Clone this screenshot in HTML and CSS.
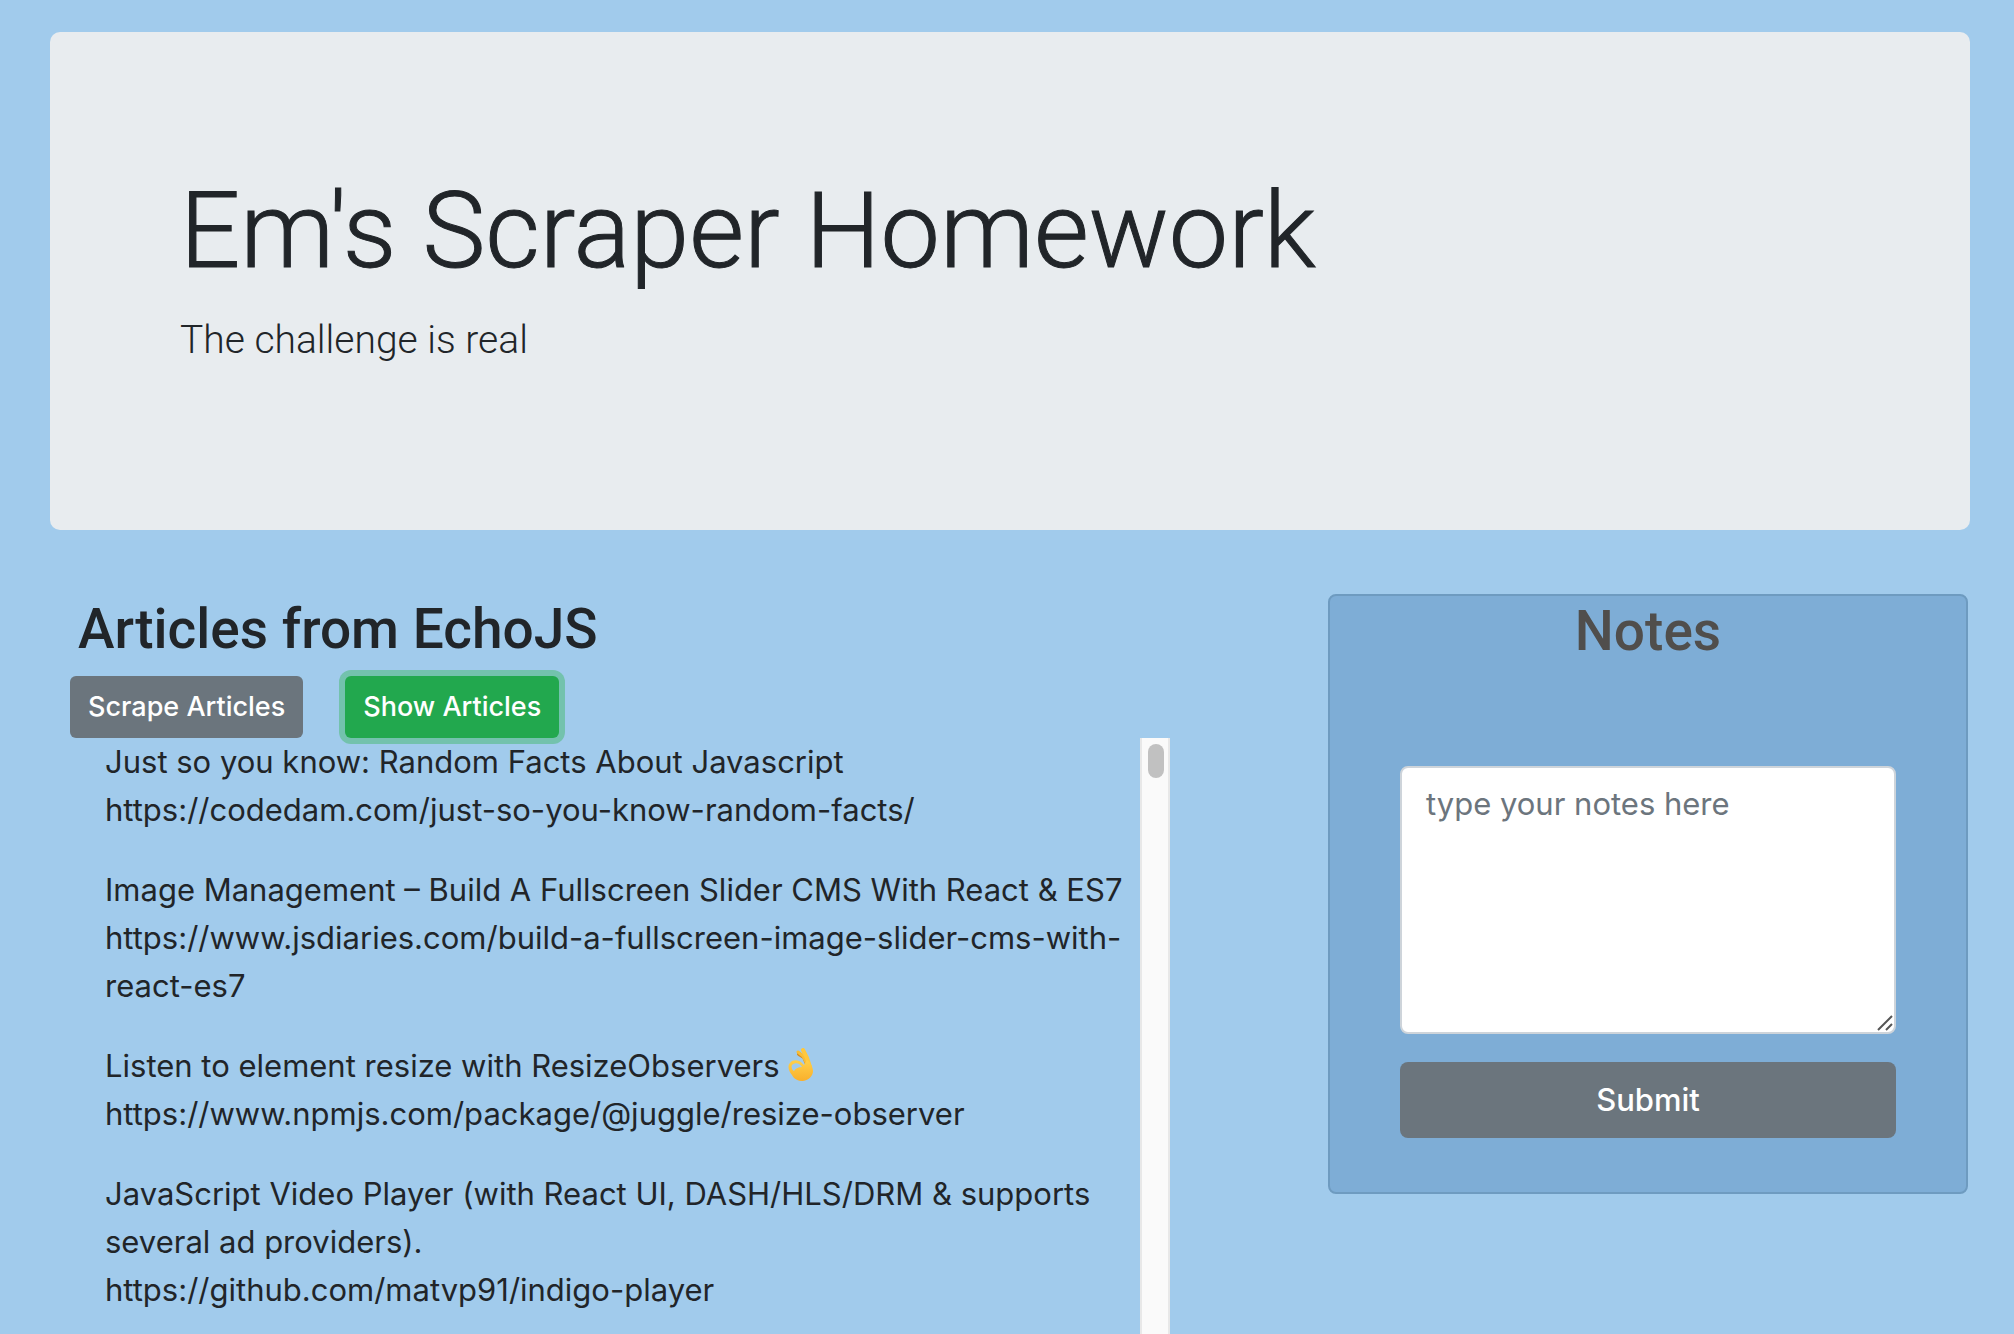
FILE: index.html
```html
<!DOCTYPE html>
<html lang="en">
<head>
<meta charset="utf-8">
<meta name="viewport" content="width=device-width, initial-scale=1">
<title>Em's Scraper Homework</title>
<link rel="stylesheet" href="styles.css">
</head>
<body>
<header class="jumbotron">
  <h1 class="display">Em's Scraper Homework</h1>
  <p class="lead">The challenge is real</p>
</header>
<main class="content">
  <section class="articles">
    <h2 class="heading articles-heading">Articles from EchoJS</h2>
    <div class="actions">
      <button type="button" class="btn">Scrape Articles</button>
      <button type="button" class="btn btn-success">Show Articles</button>
    </div>
    <div class="scroll-area">
      <div class="article-list">
        <p class="article">Just so you know: Random Facts About Javascript<br>https://codedam.com/just-so-you-know-random-facts/</p>
        <p class="article">Image Management – Build A Fullscreen Slider CMS With React &amp; ES7<br>https://www.jsdiaries.com/build-a-fullscreen-image-slider-cms-with-react-es7</p>
        <p class="article">Listen to element resize with ResizeObservers
          <svg class="emoji" viewBox="0 0 26 34" role="img" aria-label="OK hand">
            <defs><linearGradient id="skin" x1="0" y1="0" x2="0" y2="1"><stop offset="0" stop-color="#ffd04a"/><stop offset="1" stop-color="#f9b02c"/></linearGradient></defs>
            <g fill="none" stroke-linecap="round" stroke-linejoin="round">
              <path d="m11 6 5 3 3 7" stroke="#d08a22" stroke-width="4"/>
              <path d="m10 4 5 4 4 8" stroke="#f9bd35" stroke-width="3"/>
              <path d="m15 2 4 8 3 9" stroke="#ffc83d" stroke-width="4"/>
            </g>
            <path fill="url(#skin)" fill-rule="evenodd" d="M2 15c3-4 9-3 12 0l2 2 3-5c3 2 6 7 6 11 0 5-4 9-10 10-5 0-9-2-11-6-3-3-5-9-2-12Zm2 2c-1 2 0 5 2 6 1-2 4-4 8-4-2-4-7-5-10-2Z"/>
          </svg><br>https://www.npmjs.com/package/@juggle/resize-observer</p>
        <p class="article">JavaScript Video Player (with React UI, DASH/HLS/DRM &amp; supports several ad providers).<br>https://github.com/matvp91/indigo-player</p>
      </div>
      <div class="track" aria-hidden="true"><div class="thumb"></div></div>
    </div>
  </section>
  <form class="notes">
    <h2 class="heading notes-heading"><label for="note">Notes</label></h2>
    <div class="note-field">
      <textarea id="note" class="note-input" placeholder="type your notes here"></textarea>
      <svg class="grip" viewBox="0 0 16 16" aria-hidden="true"><path d="M1 15 15 1M9 15l6-6" stroke="#555" stroke-width="2"/></svg>
    </div>
    <button type="button" class="btn btn-block">Submit</button>
  </form>
</main>
</body>
</html>
```

FILE: styles.css
```css
* {
  box-sizing: border-box;
}

body {
  margin: 0;
  min-height: 100vh;
  display: flex;
  flex-direction: column;
  padding: 32px 44px 0 50px;
  background: #a1cbec;
  color: #212529;
  font-family: Inter, "Liberation Sans", sans-serif;
  font-size: 31px;
  line-height: 48px;
}

h1,
h2,
p {
  margin: 0;
}

.jumbotron {
  padding: 132px 130px 160px;
  border-radius: 10px;
  background: #e8ecef;
}

.display {
  margin-bottom: 12px;
  font-family: Roboto, Inter, sans-serif;
  font-size: 106px;
  font-weight: 300;
  line-height: 134px;
  -webkit-text-stroke: 1px currentColor;
}

.lead {
  font-family: Roboto, Inter, sans-serif;
  font-size: 39px;
  font-weight: 300;
  line-height: 60px;
}

.content {
  flex: 1;
  display: flex;
  justify-content: space-between;
  align-items: flex-start;
  gap: 40px;
  padding: 64px 2px 0 20px;
}

.articles {
  align-self: stretch;
  display: flex;
  flex-direction: column;
  width: 1100px;
}

.heading {
  font-family: Roboto, Inter, sans-serif;
  font-size: 55px;
  font-weight: 500;
  line-height: 70px;
}

.articles-heading {
  padding: 0 8px;
  margin-bottom: 12px;
}

.actions {
  display: flex;
  gap: 42px;
}

.btn {
  height: 62px;
  padding: 0 18px;
  border: 0;
  border-radius: 6px;
  background: #6b757d;
  color: #fff;
  font: 500 27px/42px Inter, "Liberation Sans", sans-serif;
}

.btn-success {
  background: #22a84e;
  box-shadow: 0 0 0 6px #73c2ad;
}

.scroll-area {
  flex: 1;
  display: flex;
  padding-left: 35px;
}

.article-list {
  flex: 1;
  display: flex;
  flex-direction: column;
  gap: 32px;
}

.emoji {
  width: 26px;
  height: 34px;
  vertical-align: -5px;
}

.track {
  width: 30px;
  padding: 6px;
  border: solid #e8e8e8;
  border-width: 0 2px;
  background: #fafafa;
}

.thumb {
  width: 16px;
  height: 34px;
  border-radius: 8px;
  background: #c1c1c1;
}

.notes {
  width: 640px;
  height: 600px;
  padding: 0 70px;
  border: 2px solid #6e9bc0;
  border-radius: 8px;
  background: #7eadd6;
}

.notes-heading {
  margin-bottom: 100px;
  color: #504e4c;
  text-align: center;
}

.note-field {
  position: relative;
  margin-bottom: 28px;
}

.note-input {
  display: block;
  width: 100%;
  height: 268px;
  padding: 12px 24px;
  border: 2px solid #ced4da;
  border-radius: 8px;
  background: #fff;
  font: inherit;
  resize: none;
}

.note-input::placeholder {
  color: #6c757d;
  opacity: 1;
}

.grip {
  position: absolute;
  right: 3px;
  bottom: 3px;
  width: 16px;
  height: 16px;
}

.btn-block {
  width: 100%;
  height: 76px;
  border-radius: 8px;
  font-size: 31px;
}
```
